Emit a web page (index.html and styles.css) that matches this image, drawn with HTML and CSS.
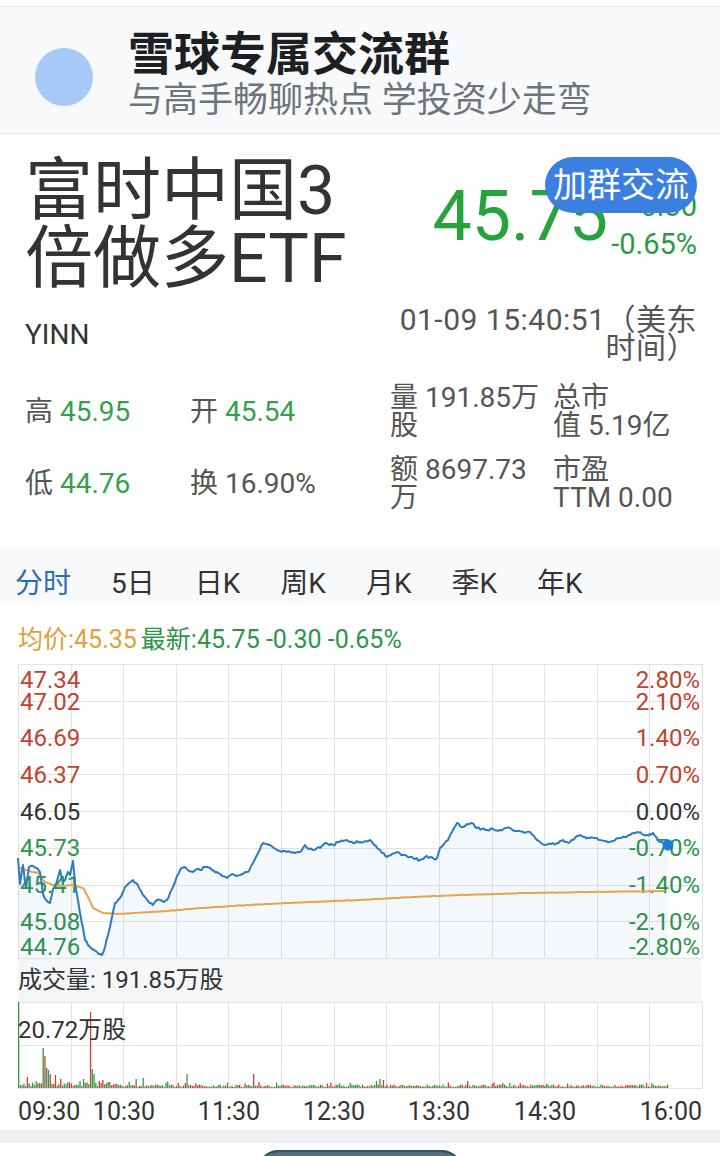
FILE: index.html
```html
<!DOCTYPE html>
<html lang="zh-CN">
<head>
  <meta charset="UTF-8" />
  <meta name="viewport" content="width=device-width, initial-scale=1.0" />
  <title>YINN 富时中国3倍做多ETF</title>
  <link rel="icon" href="data:,">
  <link rel="stylesheet" href="styles.css">
</head>
<body>
  <div class="top-strip"></div>

  <!-- Group banner -->
  <header class="group-banner">
    <div class="group-avatar"></div>
    <div class="group-text">
      <h2>雪球专属交流群</h2>
      <p>与高手畅聊热点 学投资少走弯</p>
    </div>
  </header>

  <!-- Quote head -->
  <section class="quote">
    <div class="quote-main">
      <h1 class="stock-name">富时中国3倍做多ETF</h1>
      <div class="price-box">
        <span class="price">45.75</span>
        <div class="change">
          <span>-0.30</span>
          <span>-0.65%</span>
        </div>
      </div>
    </div>
    <div class="quote-sub">
      <span class="symbol">YINN</span>
      <span class="quote-time">01-09 15:40:51（美东时间）</span>
    </div>
    <button class="join-btn">加群交流</button>
  </section>

  <section class="stats">
    <div class="stat">高 <em class="fall">45.95</em></div>
    <div class="stat">开 <em class="fall">45.54</em></div>
    <div class="stat">量 191.85万<br>股</div>
    <div class="stat">总市<br>值 5.19亿</div>
    <div class="stat">低 <em class="fall">44.76</em></div>
    <div class="stat">换 16.90%</div>
    <div class="stat">额 8697.73<br>万</div>
    <div class="stat">市盈<br>TTM 0.00</div>
  </section>

  <nav class="chart-tabs">
    <span class="active">分时</span>
    <span>5日</span>
    <span>日K</span>
    <span>周K</span>
    <span>月K</span>
    <span>季K</span>
    <span>年K</span>
  </nav>

  <div class="chart-legend">
    <span class="avg">均价:45.35</span> <span class="last">最新:45.75 -0.30 -0.65%</span>
  </div>

  <!-- Intraday price chart -->
  <svg id="priceChart" class="chart" width="720" height="299">
    <g id="priceGrid" class="grid"></g>
    <g class="axis">
      <text x="20" y="28" class="rise">47.34</text>
      <text x="20" y="50" class="rise">47.02</text>
      <text x="20" y="86" class="rise">46.69</text>
      <text x="20" y="123" class="rise">46.37</text>
      <text x="20" y="160" class="flat">46.05</text>
      <text x="20" y="196" class="drop">45.73</text>
      <text x="20" y="233" class="drop">45.41</text>
      <text x="20" y="270" class="drop">45.08</text>
      <text x="20" y="295" class="drop">44.76</text>
      <text x="700" y="28" class="rise end">2.80%</text>
      <text x="700" y="50" class="rise end">2.10%</text>
      <text x="700" y="86" class="rise end">1.40%</text>
      <text x="700" y="123" class="rise end">0.70%</text>
      <text x="700" y="160" class="flat end">0.00%</text>
      <text x="700" y="196" class="drop end">-0.70%</text>
      <text x="700" y="233" class="drop end">-1.40%</text>
      <text x="700" y="270" class="drop end">-2.10%</text>
      <text x="700" y="295" class="drop end">-2.80%</text>
    </g>
    <path id="priceFill" class="price-fill"></path>
    <path id="avgLine" class="avg-line"></path>
    <path id="priceLine" class="price-line"></path>
    <circle cx="668" cy="185" r="5.5" class="last-dot"></circle>
  </svg>

  <div class="vol-head">成交量: 191.85万股</div>

  <svg id="volChart" class="chart" width="720" height="126">
    <g id="volGrid" class="grid"></g>
    <g id="volBars"></g>
    <text x="18" y="36" class="vol-max">20.72万股</text>
    <g class="time-axis">
      <text x="18" y="118">09:30</text>
      <text x="124" y="118" class="mid">10:30</text>
      <text x="229" y="118" class="mid">11:30</text>
      <text x="334" y="118" class="mid">12:30</text>
      <text x="439" y="118" class="mid">13:30</text>
      <text x="545" y="118" class="mid">14:30</text>
      <text x="702" y="118" class="end">16:00</text>
    </g>
  </svg>

  <div class="bottom-band"></div>
  <div class="bottom-btn"></div>

  <script src="chart.js"></script>
</body>
</html>
```

FILE: styles.css
```css
* {
  box-sizing: border-box;
}

body {
  margin: 0;
  width: 720px;
  height: 1156px;
  overflow: hidden;
  background: #fff;
  color: #333;
  font-family: Roboto, "Noto Sans CJK SC", sans-serif;
}

.top-strip {
  height: 6px;
}

/* group banner */
.group-banner {
  display: flex;
  align-items: center;
  height: 128px;
  padding: 10px 0 0 35px;
  background-color: #f7f9fb;
  border-top: 1px solid #e6e8eb;
  border-bottom: 1px solid #e6e8eb;
}

.group-avatar {
  width: 58px;
  height: 58px;
  margin: 4px 35px 0 0;
  border-radius: 50%;
  background-color: #a6c9f8;
}

.group-text h2 {
  margin: 0;
  font-size: 46px;
  line-height: 52px;
  font-weight: 700;
  color: #1d1f22;
}

.group-text p {
  margin: 0;
  font-size: 35px;
  line-height: 42px;
  color: #6f747a;
}

/* quote head */
.quote {
  position: relative;
  padding: 23px 23px 0 25px;
}

.quote-main {
  display: flex;
  justify-content: space-between;
  align-items: center;
}

.stock-name {
  margin: 0;
  width: 360px;
  font-size: 68px;
  line-height: 68px;
  font-weight: 400;
  color: #333;
}

.price-box {
  display: flex;
  align-items: center;
  gap: 3px;
}

.price {
  margin-bottom: 18px;
  font-size: 70px;
  line-height: 70px;
  color: #27a33b;
}

.change {
  display: flex;
  flex-direction: column;
  align-items: flex-end;
  font-size: 29px;
  line-height: 38px;
  color: #2b9a45;
}

.quote-sub {
  display: flex;
  justify-content: space-between;
  align-items: center;
  margin-top: 13px;
}

.symbol {
  font-size: 28px;
  color: #333;
}

.quote-time {
  width: 304px;
  text-align: right;
  font-size: 30px;
  line-height: 28px;
  letter-spacing: 0.5px;
  color: #555;
}

.join-btn {
  position: absolute;
  top: 23px;
  right: 23px;
  height: 56px;
  padding: 0 8px;
  border: none;
  border-radius: 28px;
  background-color: #3b7fe0;
  color: #fff;
  font-family: inherit;
  font-size: 34px;
  line-height: 56px;
}

/* stats grid */
.stats {
  display: grid;
  grid-template-columns: 165px 200px 163px 1fr;
  grid-auto-rows: 56px;
  row-gap: 16px;
  align-items: center;
  margin-top: 22px;
  padding-left: 25px;
  font-size: 28px;
  line-height: 28px;
  color: #555;
}

.stat em {
  font-style: normal;
}

.fall {
  color: #35a04b;
}

/* tabs + legend */
.chart-tabs {
  display: flex;
  align-items: center;
  gap: 40px;
  height: 55px;
  margin-top: 36px;
  padding: 11px 0 0 15px;
  background-color: #f8f9fa;
  font-size: 28px;
  color: #333;
}

.chart-tabs .active {
  color: #2a6db0;
}

.chart-legend {
  display: flex;
  align-items: center;
  height: 57px;
  padding: 10px 0 0 18px;
  font-size: 25px;
}

.chart-legend .avg {
  color: #e1a03a;
  margin-right: 4px;
}

.chart-legend .last {
  color: #2e9448;
}

/* charts */
.chart {
  display: block;
}

.grid line {
  stroke: #e3e3e3;
  stroke-width: 1;
}

.axis text {
  font-size: 24px;
}

.axis .end,
.time-axis .end {
  text-anchor: end;
}

.time-axis .mid {
  text-anchor: middle;
}

.rise {
  fill: #c0432e;
}

.flat {
  fill: #333;
}

.drop {
  fill: #2e9448;
}

.price-fill {
  fill: rgba(43, 123, 196, 0.05);
}

.price-line {
  fill: none;
  stroke: #2b7bc4;
  stroke-width: 2;
  stroke-linejoin: round;
}

.avg-line {
  fill: none;
  stroke: #e8a548;
  stroke-width: 2;
  stroke-linejoin: round;
}

.last-dot {
  fill: #1a7fd8;
}

.bar-up {
  fill: #c9442f;
}

.bar-down {
  fill: #2f9a47;
}

.vol-max {
  font-size: 24px;
  fill: #333;
}

.time-axis text {
  font-size: 25px;
  fill: #333;
}

.vol-head {
  height: 43px;
  margin: 0 18px;
  background-color: #f5f6f8;
  font-size: 24px;
  line-height: 43px;
  color: #333;
}

.bottom-band {
  height: 13px;
  margin-top: 2px;
  background-color: #eef0f3;
}

.bottom-btn {
  width: 204px;
  height: 40px;
  margin: 7px 0 0 258px;
  border: 2px solid #3a525c;
  border-radius: 20px;
  background-color: #52707c;
}
```

FILE: chart.js
```js
// intraday chart for YINN, drawn into the two inline svgs
var NS = "http://www.w3.org/2000/svg";
var LEFT = 18, RIGHT = 702, COLS = 13;
var colW = (RIGHT - LEFT) / COLS;

function el(name, attrs, parent) {
  var node = document.createElementNS(NS, name);
  for (var k in attrs) node.setAttribute(k, attrs[k]);
  parent.appendChild(node);
  return node;
}

// seeded random so the noise is the same on every load
var seed = 7;
function rand() {
  seed = (seed * 16807) % 2147483647;
  return (seed - 1) / 2147483646;
}

function drawGrid(g, top, bottom, rows) {
  var rowH = (bottom - top) / rows;
  for (var r = 0; r <= rows; r++) {
    var y = Math.round(top + r * rowH) + 0.5;
    el("line", { x1: LEFT, x2: RIGHT, y1: y, y2: y }, g);
  }
  for (var c = 0; c <= COLS; c++) {
    var x = Math.round(LEFT + c * colW) + 0.5;
    el("line", { x1: x, x2: x, y1: top, y2: bottom }, g);
  }
}

// fill in the gaps between key points with small wiggles
function jagged(points, noise) {
  var out = [points[0]];
  for (var i = 1; i < points.length; i++) {
    var a = points[i - 1], b = points[i];
    var steps = Math.max(1, Math.round((b[0] - a[0]) / 1.75));
    for (var s = 1; s <= steps; s++) {
      var t = s / steps;
      var y = a[1] + (b[1] - a[1]) * t;
      if (s < steps) y += (rand() - 0.5) * noise;
      out.push([a[0] + (b[0] - a[0]) * t, y]);
    }
  }
  return out;
}

function toPath(pts) {
  return pts.map(function (p, i) {
    return (i ? "L" : "M") + p[0].toFixed(1) + "," + p[1].toFixed(1);
  }).join("");
}

var pricePts = [
  [18,198],[20,224],[23,205],[26,228],[29,207],[33,206],[37,208],[40,212],[43,234],[46,240],
  [50,243],[53,229],[56,224],[60,210],[63,222],[65,220],[68,212],[70,215],[73,201],[75,223],
  [78,240],[80,253],[83,268],[85,280],[88,285],[90,287],[94,290],[97,292],[100,294],[102,295],
  [105,287],[108,275],[110,267],[113,252],[115,243],[118,240],[120,238],[123,232],[125,227],
  [129,223],[133,220],[136,223],[138,225],[141,231],[143,235],[148,241],[153,245],[157,240],
  [160,240],[164,242],[167,240],[170,233],[173,227],[177,216],[180,210],[185,207],[189,211],
  [193,212],[197,209],[200,210],[205,207],[210,208],[214,211],[217,212],[222,216],[227,218],
  [232,214],[236,216],[240,215],[244,213],[248,212],[251,206],[253,203],[256,197],[258,193],
  [261,186],[263,183],[267,184],[270,185],[274,188],[277,190],[283,191],[290,192],[295,193],
  [300,192],[303,188],[305,185],[309,189],[313,190],[317,188],[320,188],[323,185],[325,183],
  [329,185],[333,185],[338,182],[343,181],[347,180],[350,182],[353,183],[357,181],[360,182],
  [365,181],[370,180],[374,185],[377,188],[382,193],[387,197],[392,194],[397,192],[403,195],
  [410,197],[415,199],[420,200],[425,197],[430,197],[434,199],[437,198],[440,188],[444,184],
  [448,180],[452,172],[457,163],[460,166],[463,167],[467,164],[472,163],[475,167],[477,168],
  [482,169],[487,170],[493,169],[500,170],[505,168],[510,168],[516,171],[523,172],[530,172],
  [534,176],[537,180],[541,183],[545,185],[551,184],[557,183],[560,181],[563,180],[567,182],
  [570,182],[575,178],[580,175],[585,177],[590,178],[595,178],[600,180],[605,181],[610,182],
  [615,180],[620,178],[625,177],[630,175],[634,173],[637,172],[642,174],[647,175],[650,174],
  [653,173],[657,178],[660,182],[664,184],[668,185]
];

var avgPts = [
  [18,207],[25,210],[32,212],[38,213],[45,222],[53,225],[63,226],[73,225],[83,228],[88,237],
  [93,248],[103,253],[117,254],[133,253],[167,251],[200,248],[267,244],[333,241],[360,240],
  [393,238],[460,235],[527,233],[593,232],[665,231]
];

var priceLine = jagged(pricePts, 2.4);
var avgLine = jagged(avgPts, 0.4);

drawGrid(document.getElementById("priceGrid"), 4, 298, 8);
document.getElementById("priceLine").setAttribute("d", toPath(priceLine));
document.getElementById("avgLine").setAttribute("d", toPath(avgLine));
document.getElementById("priceFill").setAttribute("d", toPath(priceLine) + "L668,298L18,298Z");

// volume bars, one per minute, 09:30 to 15:40
drawGrid(document.getElementById("volGrid"), 0, 86, 2);

var spikes = {
  0: [86, "d"], 5: [11, "u"], 14: [40, "d"], 15: [32, "u"], 16: [20, "d"], 17: [18, "d"],
  18: [14, "u"], 21: [13, "u"], 24: [9, "u"], 35: [7, "d"], 37: [9, "d"], 41: [76, "u"],
  42: [19, "d"], 43: [14, "d"], 46: [7, "u"], 48: [8, "u"], 51: [6, "u"], 67: [9, "d"],
  71: [10, "d"], 96: [14, "d"], 134: [14, "u"], 204: [7, "d"], 206: [9, "d"], 208: [8, "u"],
  256: [7, "u"]
};
var bars = document.getElementById("volBars");
for (var i = 0; i < 371; i++) {
  var h, up;
  if (spikes[i]) {
    h = spikes[i][0];
    up = spikes[i][1] === "u";
  } else {
    h = (i < 60 ? 2 + rand() * 4 : 1 + rand() * 2.5);
    if (rand() < 0.05) h += 3;
    up = rand() < 0.5;
  }
  el("rect", {
    x: (LEFT + i * 1.754).toFixed(2), y: (86 - h).toFixed(1),
    width: 1.3, height: h.toFixed(1), "class": up ? "bar-up" : "bar-down"
  }, bars);
}
```
